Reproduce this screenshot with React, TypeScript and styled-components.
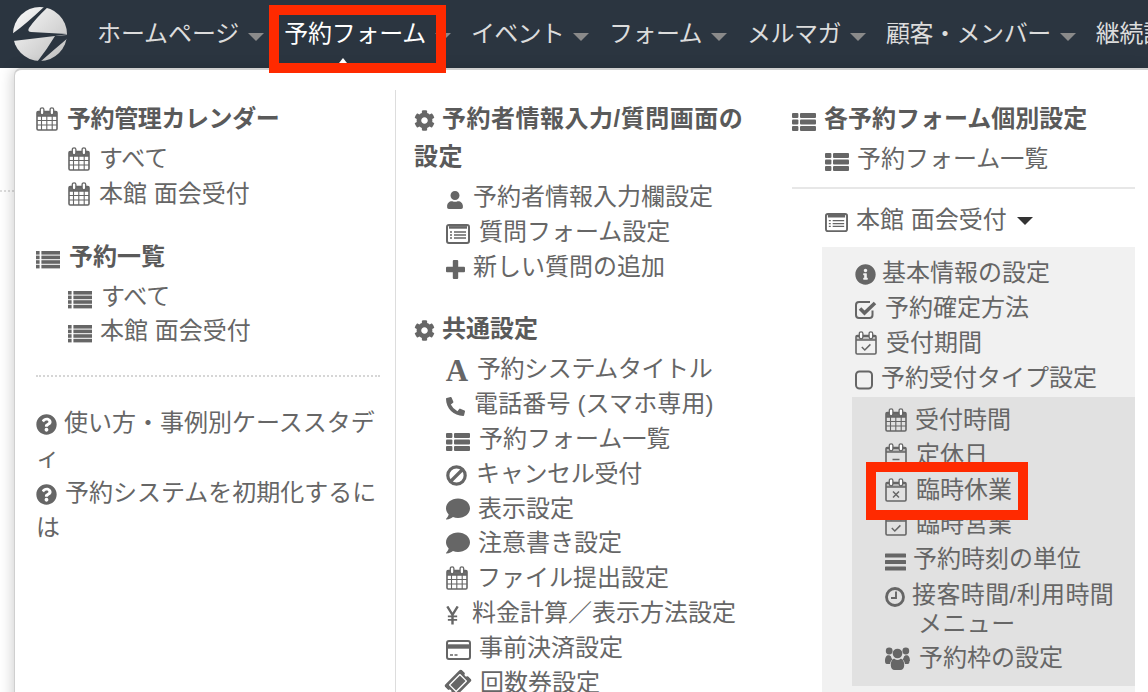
import React from 'react';
import styled, { createGlobalStyle } from 'styled-components';
import { FaCog, FaUser, FaPhoneAlt, FaComment, FaTicketAlt, FaInfoCircle, FaQuestionCircle } from 'react-icons/fa';

const Global = createGlobalStyle`
  html, body { margin: 0; padding: 0; background: #fff; }
  body { font-family: "Liberation Sans", "Noto Sans CJK JP", sans-serif; font-size: 24px; color: #666; }
`;

const Page = styled.div`
  position: relative;
  width: 1148px;
  height: 692px;
  overflow: hidden;
  background: #fff;
`;
const Header = styled.header`
  height: 68px;
  background: #2b3540;
  display: flex;
  align-items: flex-start;
  white-space: nowrap;
`;
const Logo = styled.svg`
  width: 54px;
  height: 54px;
  margin: 7px 30px 0 13px;
  flex: none;
`;
const NavItem = styled.div<{ $active?: boolean; $tight: number }>`
  display: flex;
  align-items: center;
  height: 62px;
  padding-right: 20px;
  flex: none;
  color: ${p => (p.$active ? '#fff' : '#dcdcdc')};
  font-size: 24px;
  letter-spacing: ${p => p.$tight}px;
`;
const NavCaret = styled.span`
  width: 0;
  height: 0;
  margin: 12px 0 0 9px;
  border-left: 8px solid transparent;
  border-right: 8px solid transparent;
  border-top: 8px solid #8a8a8a;
`;
const BackgroundRule = styled.div`
  position: absolute;
  top: 190px;
  left: 0;
  width: 14px;
  border-top: 2px dotted #ddd;
`;
const Menu = styled.div`
  position: absolute;
  top: 68px;
  left: 15px;
  right: 0;
  bottom: -20px;
  display: grid;
  grid-template-columns: 381px 396px 1fr;
  background: #fff;
  border-top: 2px solid #cfcfcf;
  border-top-left-radius: 7px;
  box-shadow: -1px 0 0 #cfcfcf, -3px 0 13px rgba(0, 0, 0, 0.18);
`;
const MenuCaret = styled.span`
  position: absolute;
  top: 58px;
  left: 339px;
  width: 0;
  height: 0;
  border-left: 4px solid transparent;
  border-right: 4px solid transparent;
  border-bottom: 5px solid #fff;
`;
const Column = styled.div<{ $left: number; $right: number; $rule?: boolean }>`
  padding: 30px ${p => p.$right}px 0 ${p => p.$left}px;
  min-width: 0;
  ${p => (p.$rule ? 'border-right: 1px solid #ddd; margin-top: 20px; padding-top: 10px;' : '')}
`;
const Heading = styled.div<{ $space?: boolean; $tight?: number }>`
  font-weight: 700;
  line-height: 38px;
  color: #5a5a5a;
  margin: ${p => (p.$space ? '26px' : '0')} 0 4px;
  letter-spacing: ${p => p.$tight ?? 0}px;
`;
const Row = styled.div<{ $indent: number; $hang?: number; $tight?: number }>`
  line-height: 34.8px;
  margin-left: ${p => p.$indent}px;
  letter-spacing: ${p => p.$tight ?? 0}px;
  ${p => (p.$hang ? `padding: 3px 0 3px ${p.$hang}px; text-indent: -${p.$hang}px; line-height: 29px;` : '')}
`;
const Glyph = styled.span<{ $w: number; $gap: number; $tilt?: boolean }>`
  display: inline-flex;
  align-items: center;
  justify-content: center;
  text-indent: 0;
  width: ${p => p.$w}px;
  height: 24px;
  margin-right: ${p => p.$gap}px;
  vertical-align: -4px;
  color: #666;
  letter-spacing: 0;
  ${p => (p.$tilt ? 'transform: rotate(-45deg);' : '')}
  svg { width: 100%; height: auto; display: block; flex: none; }
`;
const SerifA = styled.span`
  font-family: "Liberation Serif", serif;
  font-weight: 700;
  font-size: 31px;
  line-height: 24px;
  color: #666;
`;
const DottedRule = styled.div`
  border-top: 2px dotted #d6d6d6;
  margin: 26px 0 29px;
`;
const SolidRule = styled.div`
  border-top: 2px solid #e7e7e7;
  margin: 10px 0 14px;
`;
const Caret = styled.span`
  display: inline-block;
  width: 0;
  height: 0;
  margin-left: 10px;
  vertical-align: 3px;
  border-left: 8px solid transparent;
  border-right: 8px solid transparent;
  border-top: 8px solid #333;
`;
const SubPanel = styled.div`
  margin: 9px 0 0 30px;
  padding: 9.6px 0 30px 33px;
  background: #f1f1f1;
`;
const InnerPanel = styled.div`
  margin: 2px 0 0 -3px;
  padding: 5.6px 15px 10px 33px;
  background: #e1e1e1;
`;
const Highlight = styled.div`
  position: absolute;
  border: 10px solid #ff2a00;
  box-sizing: border-box;
`;
const NavHighlight = styled(Highlight)`
  left: 269px; top: 5px; width: 177px; height: 68px;
`;
const ItemHighlight = styled(Highlight)`
  left: 866px; top: 462px; width: 162px; height: 58px;
`;

const Cal = ({ mark }: { mark?: 'grid' | 'minus' | 'x' | 'check' }) => (
  <svg viewBox="0 0 22 24" fill="none">
    <path d="M1 5.2h20M1 9h20" stroke="currentColor" strokeWidth={mark === 'grid' ? 1.6 : 1.4} />
    <rect x="1" y="4.5" width="20" height="18.5" rx="1.2" stroke="currentColor" strokeWidth="1.6" />
    <path d="M1 4.5h20v4.5H1z" fill="currentColor" opacity={mark === 'grid' ? 0.95 : 0.35} />
    <rect x="4.3" y="0.8" width="3.6" height="7" rx="1.8" fill="#fff" stroke="currentColor" strokeWidth="1.3" />
    <rect x="14.1" y="0.8" width="3.6" height="7" rx="1.8" fill="#fff" stroke="currentColor" strokeWidth="1.3" />
    {mark === 'grid' && <path d="M5.5 9v14M10.8 9v14M16.2 9v14M1 13.5h20M1 18h20" stroke="currentColor" strokeWidth="1.1" />}
    {mark === 'minus' && <path d="M7.5 16.5h7" stroke="currentColor" strokeWidth="1.5" />}
    {mark === 'x' && <path d="M8 13.5l6 6M14 13.5l-6 6" stroke="currentColor" strokeWidth="1.5" />}
    {mark === 'check' && <path d="M6.8 16l3 3 5.6-5.6" stroke="currentColor" strokeWidth="1.5" />}
  </svg>
);
const ListIcon = () => (
  <svg viewBox="0 0 24 18" fill="currentColor">
    {[0, 4.6, 9.2, 13.8].map(y => (
      <React.Fragment key={y}>
        <rect x="0" y={y} width="3.6" height="3.6" />
        <rect x="5.4" y={y} width="18.6" height="3.6" />
      </React.Fragment>
    ))}
  </svg>
);
const ThList = () => (
  <svg viewBox="0 0 24 18" fill="currentColor">
    {[0, 6.5, 13].map(y => (
      <React.Fragment key={y}>
        <rect x="0" y={y} width="6.4" height="5" rx="1" />
        <rect x="8" y={y} width="16" height="5" rx="1" />
      </React.Fragment>
    ))}
  </svg>
);
const ListAlt = () => (
  <svg viewBox="0 0 24 20" fill="none" stroke="currentColor">
    <rect x="1" y="1" width="22" height="18" rx="2" strokeWidth="2" />
    <path d="M3 3.4h18" strokeWidth="2.6" />
    <path d="M4 8h2M4 11h2M4 14h2M8 8h12M8 11h12M8 14h12" strokeWidth="1.3" />
  </svg>
);
const PlusIcon = () => (
  <svg viewBox="0 0 19 19" fill="currentColor">
    <rect x="6.8" y="0" width="5.4" height="19" rx="1" />
    <rect x="0" y="6.8" width="19" height="5.4" rx="1" />
  </svg>
);
const BanIcon = () => (
  <svg viewBox="0 0 21 21" fill="none" stroke="currentColor" strokeWidth="3.2">
    <circle cx="10.5" cy="10.5" r="8.7" />
    <path d="M4.5 16.5L16.5 4.5" />
  </svg>
);
const YenIcon = () => (
  <svg viewBox="0 0 14 20" fill="none" stroke="currentColor" strokeWidth="2.6">
    <path d="M1.4 0.5L7 9.5L12.6 0.5M7 9v11" />
    <path d="M2 11.2h10M2 15h10" strokeWidth="2" />
  </svg>
);
const CardIcon = () => (
  <svg viewBox="0 0 25 20" fill="none" stroke="currentColor">
    <rect x="1" y="1" width="23" height="18" rx="2" strokeWidth="2" />
    <path d="M1 6.5h23" strokeWidth="4.4" />
    <path d="M4 15h3M8.5 15h3" strokeWidth="1.4" />
  </svg>
);
const CheckBox = () => (
  <svg viewBox="0 0 22 20" fill="none" stroke="currentColor">
    <path d="M17.5 10.5V15a3 3 0 0 1-3 3H4a3 3 0 0 1-3-3V5a3 3 0 0 1 3-3h11" strokeWidth="2" />
    <path d="M5 8.5l4.5 4.5L20 3" strokeWidth="3.6" />
  </svg>
);
const SquareIcon = () => (
  <svg viewBox="0 0 18 20" fill="none" stroke="currentColor" strokeWidth="2">
    <rect x="1" y="1.5" width="16" height="17" rx="3.5" />
  </svg>
);
const BarsIcon = () => (
  <svg viewBox="0 0 21 18" fill="currentColor">
    <rect y="0.5" width="21" height="4" rx="0.6" />
    <rect y="7" width="21" height="4" rx="0.6" />
    <rect y="13.5" width="21" height="4" rx="0.6" />
  </svg>
);
const ClockIcon = () => (
  <svg viewBox="0 0 20 20" fill="none" stroke="currentColor">
    <circle cx="10" cy="10" r="8.5" strokeWidth="2.8" />
    <path d="M11 4.5V11H6" strokeWidth="1.9" />
  </svg>
);
const UsersIcon = () => (
  <svg viewBox="0 0 25 24" fill="currentColor">
    <circle cx="12.5" cy="7.5" r="4.8" />
    <circle cx="4.2" cy="5" r="3.4" />
    <circle cx="20.8" cy="5" r="3.4" />
    <path d="M0 15c0-4 1.5-5.8 3.5-5.8 1 0 1.8.6 2.4 1 .3 1.6 1 2.6 1.7 3.2-1.7 1-2.4 2.7-2.5 4.6H1.8C.7 18 0 17 0 15zM25 15c0-4-1.5-5.8-3.5-5.8-1 0-1.8.6-2.4 1-.3 1.6-1 2.6-1.7 3.2 1.7 1 2.4 2.7 2.5 4.6h2.9c1.1 0 1.7-1 1.7-3z" />
    <path d="M5.8 19.5c0-4.5 1.6-6.8 3.6-6.8 1 .9 2 1.3 3.1 1.3s2.1-.4 3.1-1.3c2 0 3.6 2.3 3.6 6.8 0 2.7-1.6 4.5-3.8 4.5H9.6c-2.2 0-3.8-1.8-3.8-4.5z" />
  </svg>
);

const CAL = <Cal mark="grid" />;

type ItemProps = { icon: React.ReactNode; w: number; gap: number; text: React.ReactNode; indent: number; hang?: number; tilt?: boolean; tight?: number };
const Item = ({ icon, w, gap, text, indent, hang, tilt, tight }: ItemProps) => (
  <Row $indent={indent} $hang={hang} $tight={tight}>
    <Glyph $w={w} $gap={gap} $tilt={tilt}>{icon}</Glyph>
    {text}
  </Row>
);
const Head = ({ icon, w, gap, text, space, tight }: { icon: React.ReactNode; w: number; gap: number; text: string; space?: boolean; tight?: number }) => (
  <Heading $space={space} $tight={tight}>
    <Glyph $w={w} $gap={gap}>{icon}</Glyph>
    {text}
  </Heading>
);

const NAV: [string, number][] = [
  ['ホームページ', -0.1],
  ['予約フォーム', -0.25],
  ['イベント', -0.75],
  ['フォーム', -0.55],
  ['メルマガ', -0.55],
  ['顧客・メンバー', -0.45],
  ['継続課金', -0.3],
];

export default function App() {
  return (
    <Page>
      <Global />
      <Header>
        <Logo viewBox="0 0 54 54">
          <defs>
            <linearGradient id="lg" x1="0" y1="0" x2="1" y2="1">
              <stop offset="0" stopColor="#fbfbfb" />
              <stop offset="1" stopColor="#bdbdbd" />
            </linearGradient>
          </defs>
          <circle cx="27" cy="27" r="27" fill="url(#lg)" />
          <path d="M32 -1 L36 -1 Q22 12 16 21 Q14 25 18 25 L56 27 L42 29 L-1 34 L-1 27 Q12 18 32 -1Z" fill="#2b3540" />
          <path d="M42 29 L55 28 L55 31 Q42 42 27 55 L24 55 Q33 44 42 29Z" fill="#2b3540" />
        </Logo>
        {NAV.map(([n, t], i) => (
          <NavItem key={n} $active={i === 1} $tight={t}>
            <span>{n}</span>
            {i < 6 && <NavCaret />}
          </NavItem>
        ))}
      </Header>
      <BackgroundRule />
      <Menu>
        <Column $left={21} $right={15} $rule>
          <Head icon={CAL} w={22} gap={9} text="予約管理カレンダー" tight={-0.4} />
          <Item indent={32} icon={CAL} w={22} gap={9} text="すべて" />
          <Item indent={32} icon={CAL} w={22} gap={9} text="本館 面会受付" />
          <Head icon={<ListIcon />} w={24} gap={9} text="予約一覧" space />
          <Item indent={32} icon={<ListIcon />} w={24} gap={9} text="すべて" />
          <Item indent={32} icon={<ListIcon />} w={24} gap={8} text="本館 面会受付" />
          <DottedRule />
          <Item indent={0} icon={<FaQuestionCircle />} w={21} gap={7} text="使い方・事例別ケーススタディ" />
          <Item indent={0} icon={<FaQuestionCircle />} w={21} gap={8} text="予約システムを初期化するには" />
        </Column>
        <Column $left={18} $right={35}>
          <Head icon={<FaCog />} w={21} gap={7} text="予約者情報入力/質問画面の設定" tight={0.5} />
          <Item indent={32} icon={<FaUser />} w={18} gap={9} text="予約者情報入力欄設定" />
          <Item indent={32} icon={<ListAlt />} w={24} gap={9} text="質問フォーム設定" />
          <Item indent={32} icon={<PlusIcon />} w={19} gap={8} text="新しい質問の追加" />
          <Head icon={<FaCog />} w={21} gap={7} text="共通設定" space />
          <Item indent={32} icon={<SerifA>A</SerifA>} w={22} gap={9} text="予約システムタイトル" tight={-0.4} />
          <Item indent={32} icon={<FaPhoneAlt />} w={19} gap={9} text="電話番号 (スマホ専用)" tight={0.15} />
          <Item indent={32} icon={<ThList />} w={24} gap={9} text="予約フォーム一覧" />
          <Item indent={32} icon={<BanIcon />} w={21} gap={9} text="キャンセル受付" tight={-0.3} />
          <Item indent={32} icon={<FaComment />} w={24} gap={8} text="表示設定" />
          <Item indent={32} icon={<FaComment />} w={24} gap={8} text="注意書き設定" />
          <Item indent={32} icon={CAL} w={22} gap={9} text="ファイル提出設定" />
          <Item indent={32} icon={<YenIcon />} w={13} gap={13} text="料金計算／表示方法設定" />
          <Item indent={32} icon={<CardIcon />} w={25} gap={8} text="事前決済設定" />
          <Item indent={32} icon={<FaTicketAlt />} w={24} gap={10} text="回数券設定" tilt />
        </Column>
        <Column $left={0} $right={13}>
          <Head icon={<ThList />} w={24} gap={8} text="各予約フォーム個別設定" />
          <Item indent={33} icon={<ThList />} w={24} gap={8} text="予約フォーム一覧" />
          <SolidRule />
          <Item indent={33} icon={<ListAlt />} w={23} gap={8} text={<>本館 面会受付<Caret /></>} />
          <SubPanel>
            <Item indent={0} icon={<FaInfoCircle />} w={21} gap={6} text="基本情報の設定" />
            <Item indent={0} icon={<CheckBox />} w={22} gap={8} text="予約確定方法" />
            <Item indent={0} icon={<Cal mark="check" />} w={22} gap={9} text="受付期間" />
            <Item indent={0} icon={<SquareIcon />} w={18} gap={8} text="予約受付タイプ設定" />
            <InnerPanel>
              <Item indent={0} icon={CAL} w={22} gap={8} text="受付時間" />
              <Item indent={0} icon={<Cal mark="minus" />} w={22} gap={9} text="定休日" />
              <Item indent={0} icon={<Cal mark="x" />} w={22} gap={9} text="臨時休業" />
              <Item indent={0} icon={<Cal mark="check" />} w={22} gap={9} text="臨時営業" />
              <Item indent={0} icon={<BarsIcon />} w={21} gap={7} text="予約時刻の単位" />
              <Item indent={0} hang={33} tight={0.4} icon={<ClockIcon />} w={20} gap={7} text="接客時間/利用時間メニュー" />
              <Item indent={0} icon={<UsersIcon />} w={25} gap={9} text="予約枠の設定" />
            </InnerPanel>
          </SubPanel>
        </Column>
      </Menu>
      <MenuCaret />
      <NavHighlight />
      <ItemHighlight />
    </Page>
  );
}
